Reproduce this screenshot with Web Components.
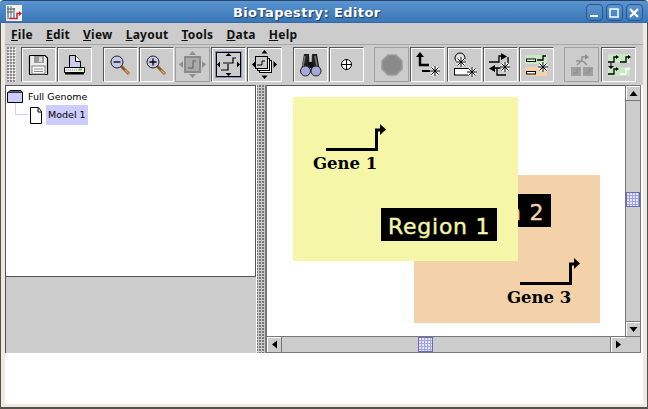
<!DOCTYPE html>
<html>
<head>
<meta charset="utf-8">
<title>BioTapestry: Editor</title>
<style>
  html, body { margin: 0; padding: 0; background: #fff; }
</style>
</head>
<body>
<bt-window>
  <bt-titlebar slot="title">BioTapestry: Editor</bt-titlebar>
  <bt-menubar slot="menu">
    <bt-menu>File</bt-menu>
    <bt-menu>Edit</bt-menu>
    <bt-menu>View</bt-menu>
    <bt-menu>Layout</bt-menu>
    <bt-menu>Tools</bt-menu>
    <bt-menu>Data</bt-menu>
    <bt-menu>Help</bt-menu>
  </bt-menubar>
  <bt-toolbar slot="tools">
    <bt-tool icon="save"></bt-tool>
    <bt-tool icon="print"></bt-tool>
    <bt-sep></bt-sep>
    <bt-tool icon="zoomout"></bt-tool>
    <bt-tool icon="zoomin"></bt-tool>
    <bt-tool icon="fitsel" disabled></bt-tool>
    <bt-tool icon="fitall" active></bt-tool>
    <bt-tool icon="fitpage"></bt-tool>
    <bt-sep></bt-sep>
    <bt-tool icon="search"></bt-tool>
    <bt-tool icon="center"></bt-tool>
    <bt-sep></bt-sep>
    <bt-tool icon="stop" disabled></bt-tool>
    <bt-tool icon="addgene"></bt-tool>
    <bt-tool icon="addnode"></bt-tool>
    <bt-tool icon="addlink"></bt-tool>
    <bt-tool icon="addregion"></bt-tool>
    <bt-sep></bt-sep>
    <bt-tool icon="tree" disabled></bt-tool>
    <bt-tool icon="sync"></bt-tool>
  </bt-toolbar>
  <bt-split slot="main">
    <bt-tree slot="left"></bt-tree>
    <bt-scrollpane slot="right">
      <bt-region name="Region 2" fill="#f3d2a9" ink="#f3d2a9" style="left:147px;top:89px;width:186px;height:148px;--lx:21px;--ly:19px"></bt-region>
      <bt-gene name="Gene 3" style="left:240px;top:170px"></bt-gene>
      <bt-region name="Region 1" fill="#f5f6a8" ink="#f5f6a8" style="left:26px;top:11px;width:225px;height:164px;--lx:88px;--ly:111px"></bt-region>
      <bt-gene name="Gene 1" style="left:46px;top:36px"></bt-gene>
    </bt-scrollpane>
  </bt-split>
</bt-window>

<script>
class BtWindow extends HTMLElement {
  constructor() {
    super();
    this.attachShadow({ mode: "open" });
  }
  connectedCallback() {
    this.shadowRoot.innerHTML = `
    <style>
      :host {
        display: flex;
        flex-direction: column;
        width: 648px;
        height: 409px;
        box-sizing: border-box;
        background: #fff;
        font-family: "DejaVu Sans", sans-serif;
        overflow: hidden;
      }
      .body {
        flex: 1;
        display: flex;
        flex-direction: column;
        min-height: 0;
        border-left: 1px solid #55524c;
        border-right: 1px solid #55524c;
        border-bottom: 2px solid #55524c;
        background: #fff;
      }
      .inner {
        flex: 1;
        min-height: 0;
        display: flex;
        flex-direction: column;
        border-left: 4px solid #edeae4;
        border-right: 4px solid #edeae4;
        border-bottom: 3px solid #edeae4;
      }
      .blank { flex: 1; background: #fff; }
    </style>
    <slot name="title"></slot>
    <div class="body">
      <div class="inner">
        <slot name="menu"></slot>
        <slot name="tools"></slot>
        <slot name="main"></slot>
        <div class="blank"></div>
      </div>
    </div>`;
  }
}

class BtTitlebar extends HTMLElement {
  constructor() {
    super();
    this.attachShadow({ mode: "open" });
  }
  connectedCallback() {
    this.shadowRoot.innerHTML = `
    <style>
      :host {
        display: flex;
        align-items: center;
        height: 23px;
        box-sizing: border-box;
        padding: 1px 5px 0 6px;
        background: linear-gradient(#5f97d2 0, #5590cc 3px, #4a86c4 10px, #3b76b6 21px, #2b5d98 22px, #2a4f7c 23px);
        border-top: 1px solid #27456b;
        border-radius: 4px 4px 0 0;
        color: #fff;
      }
      .logo { width: 16px; height: 16px; flex: none; }
      .text {
        flex: 1;
        text-align: center;
        padding-left: 6px;
        font: bold 13px "DejaVu Sans", sans-serif;
        letter-spacing: .4px;
        text-shadow: 1px 1px 1px #1f3d63;
      }
      .btns { display: flex; gap: 2.500px; }
      .b {
        width: 17.500px;
        height: 17px;
        box-sizing: border-box;
        border: 1px solid #2b568a;
        border-radius: 4px;
        background: linear-gradient(#5b94d0, #3f7dbd);
        display: flex;
        align-items: center;
        justify-content: center;
      }
      svg { display: block; }
    </style>
    <svg class="logo" viewBox="0 0 16 16">
      <rect width="16" height="16" fill="#f7f4f0"/>
      <path d="M2 1v13M8 3v11" stroke="#2a45c0" stroke-width="1" fill="none"/>
      <path d="M5 1v13" stroke="#2a9a3a" fill="none"/>
      <path d="M1 4h8M1 7h6" stroke="#555" fill="none"/>
      <path d="M3 13.500h8v-5h2" stroke="#d02020" stroke-width="1.500" fill="none"/>
      <path d="M13 6l3 2.500-3 2.500z" fill="#d02020"/>
    </svg>
    <span class="text"><slot></slot></span>
    <div class="btns">
      <div class="b"><svg width="10" height="10"><rect x="1" y="7" width="8" height="2" fill="#fff"/></svg></div>
      <div class="b"><svg width="10" height="10"><rect x="1" y="1" width="8" height="8" fill="none" stroke="#fff" stroke-width="1.500"/></svg></div>
      <div class="b"><svg width="10" height="10"><path d="M1 1l8 8M9 1l-8 8" stroke="#fff" stroke-width="2.200"/></svg></div>
    </div>`;
  }
}

class BtMenubar extends HTMLElement {
  constructor() {
    super();
    this.attachShadow({ mode: "open" });
  }
  connectedCallback() {
    this.shadowRoot.innerHTML = `
    <style>
      :host {
        display: flex;
        align-items: center;
        gap: 13px;
        height: 21px;
        box-sizing: border-box;
        padding: 2px 0 0 6px;
        background: #ccc;
      }
    </style>
    <slot></slot>`;
  }
}

class BtMenu extends HTMLElement {
  constructor() {
    super();
    this.attachShadow({ mode: "open" });
  }
  connectedCallback() {
    const label = this.textContent;
    this.shadowRoot.innerHTML = `
    <style>
      :host {
        display: block;
        font: bold 12px "Noto Sans", sans-serif;
        color: #111;
        letter-spacing: .25px;
      }
      u { text-underline-offset: 1px; }
    </style>
    <u>${label[0]}</u>${label.slice(1)}`;
  }
}

class BtToolbar extends HTMLElement {
  constructor() {
    super();
    this.attachShadow({ mode: "open" });
  }
  connectedCallback() {
    this.shadowRoot.innerHTML = `
    <style>
      :host {
        display: flex;
        align-items: flex-start;
        height: 41px;
        box-sizing: border-box;
        padding: 2px 0 0 2px;
        background: #ccc;
        border-top: 1px solid #a8a8a8;
      }
      .grip {
        width: 9px;
        height: 35px;
        margin-right: 5px;
        background-image: radial-gradient(circle at 1px 1px, #8a8a8a 1px, transparent 1px), radial-gradient(circle at 1px 1px, #eee .8px, transparent 1px);
        background-size: 3px 3px;
        background-position: 0 0, 1px 1px;
      }
      .row { display: flex; gap: 1.200px; }
    </style>
    <div class="grip"></div>
    <div class="row"><slot></slot></div>`;
  }
}

class BtSep extends HTMLElement {
  constructor() {
    super();
    this.attachShadow({ mode: "open" });
  }
  connectedCallback() {
    this.shadowRoot.innerHTML = `<style>:host { display: block; width: 8px; }</style>`;
  }
}

const STAR = (x, y, c = "#000") => {
  const d = `M${x - 5} ${y}h10M${x} ${y - 5}v10M${x - 3.500} ${y - 3.500}l7 7M${x + 3.500} ${y - 3.500}l-7 7`;
  return `<path d="${d}" stroke="#fff" stroke-width="2.500" fill="none"/><path d="${d}" stroke="${c}" stroke-width="1" fill="none"/>`;
};
const LENS = (cx, cy, mark) => `
  <path d="M${cx + 4} ${cy + 4}l8 8" stroke="#8a5a2a" stroke-width="3"/>
  <path d="M${cx + 8} ${cy + 8}l4 4" stroke="#e0a060" stroke-width="1.500"/>
  <circle cx="${cx}" cy="${cy}" r="6" fill="#c6c6ea" stroke="#222" stroke-width="1"/>
  <path d="${mark}" stroke="#000" stroke-width="1.300"/>`;
const ARROWS = (c) => `
  <path d="M17.500 4l-3.500 4h7zM17.500 31l-3.500-4h7zM4 17.500l4-3.500v7zM31 17.500l-4-3.500v7z" fill="${c}"/>`;

const ICONS = {
  save: `
    <path d="M9 8.500h15l2.500 2.500v16a.5.5 0 0 1-.5.5H9a.5.5 0 0 1-.5-.5V9a.5.5 0 0 1 .5-.5z" fill="#eee" stroke="#000" stroke-width="1.200"/>
    <rect x="13" y="9" width="10" height="7" fill="#999"/>
    <rect x="18" y="10" width="3" height="5" fill="#ddd"/>
    <rect x="11" y="19" width="13" height="8" fill="#fff" stroke="#777"/>
    <path d="M13 22h9M13 24.500h9" stroke="#888"/>`,
  print: `
    <path d="M12.500 8.500h6l5 6v6h-11z" fill="#ccccee" stroke="#000"/>
    <path d="M18.500 8.500v6h5" fill="#fff" stroke="#000"/>
    <path d="M7.500 20.500h20v5h-20z" fill="#eee" stroke="#000"/>
    <path d="M8 26.500h19" stroke="#000" stroke-width="2"/>
    <path d="M9 23h14" stroke="#888" stroke-dasharray="1 1"/>
    <rect x="22" y="21.500" width="3" height="2" fill="#44cc22"/>`,
  zoomout: LENS(14, 15, "M10.500 15h7"),
  zoomin: LENS(14, 15, "M10.500 15h7M14 11.500v7"),
  fitsel: `
    ${ARROWS("#8f8f8f")}
    <rect x="10" y="10" width="15" height="15" fill="#aaa" stroke="#8a8a8a" stroke-width="2"/>
    <path d="M13 21h5v-7h3" stroke="#777" stroke-width="1.500" fill="none"/>`,
  fitall: `
    <rect x="4.500" y="4.500" width="26" height="26" fill="none" stroke="#8f8fc8"/>
    <rect x="5.500" y="5.500" width="24" height="24" fill="none" stroke="#000"/>
    <path d="M17.500 6l-3 3h6zM17.500 29l-3-3h6zM6 17.500l3-3v6zM29 17.500l-3-3v6z" fill="#000"/>
    <path d="M10 23h7v-6M17 16h5v-5h3M12 16h5" stroke="#000" stroke-width="1.200" fill="none"/>`,
  fitpage: `
    <path d="M17.500 3l-3 3.500h6zM17.500 32l-3-3.500h6zM5 17.500l3.500-3.500v7zM30 17.500l-3.500-3.500v7z" fill="#000"/>
    <rect x="12.500" y="13.500" width="12" height="12" fill="#fff" stroke="#000"/>
    <rect x="10.500" y="11.500" width="12" height="12" fill="#fff" stroke="#000"/>
    <rect x="8.500" y="9.500" width="12" height="12" fill="#ccc" stroke="#000"/>
    <path d="M10 18h5v-4h3" stroke="#000" fill="none"/>`,
  search: `
    <path d="M8 24L11 7h5l1 17zM18 24l1-17h5l3 17z" fill="#222"/>
    <path d="M12 9l-2 10M22 9l2 10" stroke="#777" stroke-width="1.500"/>
    <rect x="15" y="15" width="5" height="6" fill="#111"/>
    <circle cx="12.500" cy="24" r="5" fill="#a8a8dc" stroke="#222"/>
    <circle cx="23" cy="24" r="5" fill="#a8a8dc" stroke="#222"/>`,
  center: `
    <circle cx="17.500" cy="17.500" r="5" fill="#fff" stroke="#000"/>
    <path d="M12 17.500h11M17.500 12v11" stroke="#000"/>`,
  stop: `<path d="M14 8h8l6 6v8l-6 6h-8l-6-6v-8z" fill="#8a8a8a" stroke="#9c9c9c" stroke-width="1.500"/>`,
  addgene: `
    <path d="M10 9v9h9" stroke="#000" stroke-width="2.500" fill="none"/>
    <path d="M10 5l-4 5h8z" fill="#000"/>
    <path d="M12 24h10" stroke="#000" stroke-width="2"/>
    ${STAR(25, 24)}`,
  addnode: `
    <circle cx="13" cy="11" r="5" fill="#ddd" stroke="#000"/>
    ${STAR(14, 15)}
    <rect x="7.500" y="21.500" width="16" height="6.500" fill="#fff" stroke="#000"/>
    ${STAR(25, 25)}`,
  addlink: `
    <path d="M6 15h10V9h4M25 10v6M14 21v7h9M12 21h9" stroke="#000" stroke-width="1.300" fill="none"/>
    <path d="M18 6l6 3.500-6 3.500zM12 18l-6 3.500 6 3.500z" fill="#000"/>
    ${STAR(22, 20)}`,
  addregion: `
    <rect x="6" y="8" width="22" height="9" fill="#c9e8c4"/>
    <rect x="6" y="20" width="22" height="9" fill="#f3d2a9"/>
    <rect x="7.500" y="12" width="9" height="2.500" fill="#fff" stroke="#000"/>
    <rect x="7.500" y="24.500" width="9" height="2.500" fill="#fff" stroke="#000"/>
    <path d="M18 13h6v-4h3" stroke="#000" stroke-width="1.300" fill="none"/>
    ${STAR(24, 20)}`,
  tree: `
    <rect x="7" y="20" width="10" height="9" fill="#a0a0a0"/>
    <rect x="19" y="20" width="10" height="9" fill="#a0a0a0"/>
    <path d="M13 18l4-4M23 18l-4-4M12 14h6v-4h3" stroke="#8f8f8f" stroke-width="1.500" fill="none"/>
    <path d="M9 26h4v-4h3M21 26h4v-4h3" stroke="#8a8a8a" fill="none"/>
    <path d="M21 7l4 3-4 3z" fill="#8f8f8f"/>`,
  sync: `
    <rect x="7" y="7" width="22" height="9" fill="#c9e8c4"/>
    <rect x="7" y="20" width="22" height="9" fill="#c9e8c4"/>
    <path d="M7 15h6v-5h3M19 15h6v-5h3M7 27h6v-5h3" stroke="#000" stroke-width="1.300" fill="none"/>
    <path d="M19 27h6v-5h3" stroke="#fff" stroke-width="1.300" fill="none"/>
    <path d="M15 8l3 2-3 2zM27 8l3 2-3 2zM15 20l3 2-3 2z" fill="#000"/>
    <path d="M27 20l3 2-3 2z" fill="#eee"/>
    <path d="M10 16v3" stroke="#000"/><path d="M7 19h6l-3 3z" fill="#000"/>`
};

class BtTool extends HTMLElement {
  constructor() {
    super();
    this.attachShadow({ mode: "open" });
  }
  connectedCallback() {
    const dis = this.hasAttribute("disabled");
    this.shadowRoot.innerHTML = `
    <style>
      :host {
        display: block;
        width: 35px;
        height: 35px;
        box-sizing: border-box;
        background: #ccc;
        border: 1px solid ${dis ? "#a0a0a0" : "#555"};
        border-right-color: ${dis ? "#a0a0a0" : "#fff"};
        border-bottom-color: ${dis ? "#a0a0a0" : "#fff"};
        box-shadow: ${dis ? "none" : "inset 1px 1px 0 #fff"};
      }
      svg { display: block; margin: -1px; }
    </style>
    <svg width="35" height="35" viewBox="0 0 35 35">${ICONS[this.getAttribute("icon")]}</svg>`;
  }
}

class BtSplit extends HTMLElement {
  constructor() {
    super();
    this.attachShadow({ mode: "open" });
  }
  connectedCallback() {
    this.shadowRoot.innerHTML = `
    <style>
      :host {
        display: flex;
        height: 268px;
        background: #ccc;
      }
      .left {
        width: 251px;
        flex: none;
        display: flex;
        box-sizing: border-box;
        border-left: 1px solid #555;
        height: 268px;
      }
      .divider {
        width: 11px;
        flex: none;
        box-sizing: border-box;
        border-left: 1px solid #fff;
        border-right: 2px solid #777;
        background-color: #ccc;
        background-image: radial-gradient(circle at 1px 1px, #777 1px, transparent 1px);
        background-size: 3px 3px;
        background-position: 2px 0;
      }
      .right { flex: 1; min-width: 0; display: flex; }
      ::slotted(*) { flex: 1; }
    </style>
    <div class="left"><slot name="left"></slot></div>
    <div class="divider"></div>
    <div class="right"><slot name="right"></slot></div>`;
  }
}

class BtTree extends HTMLElement {
  constructor() {
    super();
    this.attachShadow({ mode: "open" });
  }
  connectedCallback() {
    this.shadowRoot.innerHTML = `
    <style>
      :host {
        display: block;
        background: #ccc;
        font: 9.500px "DejaVu Sans", sans-serif;
        color: #000;
      }
      .box {
        height: 192px;
        box-sizing: border-box;
        background: #fff;
        border: 1px solid #555;
        border-left: 0;
        padding-top: 1px;
      }
      .row { display: flex; align-items: center; gap: 4px; height: 20px; }
      .row.top { padding-left: 1px; height: 18px; }
      .row.sub { padding-left: 23px; position: relative; gap: 3px; }
      .row.sub::before {
        content: "";
        position: absolute;
        left: 9px;
        top: -2px;
        width: 12px;
        height: 11px;
        border-left: 1px solid #ccccff;
        border-bottom: 1px solid #ccccff;
      }
      .sel { background: #ccccff; padding: 0 2px; height: 20px; line-height: 20px; }
      svg { display: block; flex: none; }
    </style>
    <div class="box">
      <div class="row top">
        <svg width="17" height="13" viewBox="0 0 17 13">
          <path d="M.5 2.500h15v10h-15z" fill="#ccccff" stroke="#000"/>
          <path d="M1 2.500l2-2h11l1.500 2" fill="#666680" stroke="#000"/>
        </svg>
        <span>Full Genome</span>
      </div>
      <div class="row sub">
        <svg width="14" height="17" viewBox="0 0 14 17">
          <path d="M1.500 .5h8l3 4v12h-11z" fill="#fff" stroke="#000"/>
          <path d="M9 1v4h3.500" fill="none" stroke="#000"/>
        </svg>
        <span class="sel">Model 1</span>
      </div>
    </div>`;
  }
}

class BtScrollpane extends HTMLElement {
  constructor() {
    super();
    this.attachShadow({ mode: "open" });
  }
  connectedCallback() {
    this.shadowRoot.innerHTML = `
    <style>
      :host {
        display: grid;
        grid-template-columns: 358px 16px 1fr;
        grid-template-rows: 251px 17px;
        background: #ccc;
      }
      .view {
        position: relative;
        background: #fff;
        overflow: hidden;
        border-top: 1px solid #555;
      }
      .pad { grid-row: 1 / span 2; grid-column: 3; background: #fff; }
      .corner { background: #ccc; border-top: 1px solid #777; border-right: 1px solid #777; border-bottom: 1px solid #777; }
    </style>
    <div class="view"><slot></slot></div>
    <bt-scrollbar dir="v" pos="106"></bt-scrollbar>
    <div class="pad"></div>
    <bt-scrollbar dir="h" pos="136"></bt-scrollbar>
    <div class="corner"></div>`;
  }
}

class BtScrollbar extends HTMLElement {
  constructor() {
    super();
    this.attachShadow({ mode: "open" });
  }
  connectedCallback() {
    const v = this.getAttribute("dir") === "v";
    const pos = this.getAttribute("pos");
    this.shadowRoot.innerHTML = `
    <style>
      :host {
        display: flex;
        flex-direction: ${v ? "column" : "row"};
        box-sizing: border-box;
        background: #ccc;
        border: 1px solid #777;
        ${v ? "border-bottom: 0;" : "border-right: 0; border-left: 0;"}
        position: relative;
      }
      .arrow {
        flex: none;
        ${v ? "height: 15px;" : "width: 15px;"}
        box-sizing: border-box;
        display: flex;
        align-items: center;
        justify-content: center;
        box-shadow: inset 1px 1px 0 #fff;
      }
      .first { ${v ? "border-bottom: 1px solid #777;" : "border-right: 1px solid #777;"} }
      .last { ${v ? "border-top: 1px solid #777;" : "border-left: 1px solid #777;"} }
      .track { flex: 1; position: relative; }
      .thumb {
        position: absolute;
        ${v ? `top: ${pos - 15}px; left: 0; right: 0; height: 15px;` : `left: ${pos}px; top: 0; bottom: 0; width: 15px;`}
        box-sizing: border-box;
        border: 1px solid #6b6bb0;
        background-color: #a4a4dc;
        background-image: radial-gradient(circle at 1px 1px, #e4e4ff .8px, transparent 1px);
        background-size: 3px 3px;
      }
      svg { display: block; }
    </style>
    <div class="arrow first"><svg width="9" height="9"><path d="${v ? "M4.500 2l4 5h-8z" : "M2 4.500l5-4v8z"}" fill="#000"/></svg></div>
    <div class="track"><div class="thumb"></div></div>
    <div class="arrow last"><svg width="9" height="9"><path d="${v ? "M4.500 7l4-5h-8z" : "M7 4.500l-5-4v8z"}" fill="#000"/></svg></div>`;
  }
}

class BtRegion extends HTMLElement {
  constructor() {
    super();
    this.attachShadow({ mode: "open" });
  }
  connectedCallback() {
    const fill = this.getAttribute("fill");
    this.shadowRoot.innerHTML = `
    <style>
      :host { display: block; position: absolute; background: ${fill}; }
      .label {
        position: absolute;
        left: var(--lx);
        top: var(--ly);
        height: 33px;
        padding: 0 7px;
        background: #000;
        color: ${this.getAttribute("ink")};
        font: 22px/37px "DejaVu Sans", sans-serif;
        -webkit-text-stroke: .4px ${this.getAttribute("ink")};
        letter-spacing: .75px;
        white-space: nowrap;
      }
    </style>
    <span class="label">${this.getAttribute("name")}</span>`;
  }
}

class BtGene extends HTMLElement {
  constructor() {
    super();
    this.attachShadow({ mode: "open" });
  }
  connectedCallback() {
    this.shadowRoot.innerHTML = `
    <style>
      :host { display: block; position: absolute; width: 90px; height: 70px; }
      svg { display: block; position: absolute; left: 13px; top: 0; }
      span {
        position: absolute;
        left: 0;
        top: 32px;
        font: bold 16.500px "DejaVu Serif", serif;
        color: #000;
        white-space: nowrap;
      }
    </style>
    <svg width="62" height="32" viewBox="0 0 62 32">
      <path d="M0 27.500h50.500V8H54" fill="none" stroke="#000" stroke-width="3"/>
      <path d="M54 2l6 5.500-6 5.500z" fill="#000"/>
    </svg>
    <span>${this.getAttribute("name")}</span>`;
  }
}

customElements.define("bt-window", BtWindow);
customElements.define("bt-titlebar", BtTitlebar);
customElements.define("bt-menubar", BtMenubar);
customElements.define("bt-menu", BtMenu);
customElements.define("bt-toolbar", BtToolbar);
customElements.define("bt-sep", BtSep);
customElements.define("bt-tool", BtTool);
customElements.define("bt-split", BtSplit);
customElements.define("bt-tree", BtTree);
customElements.define("bt-scrollpane", BtScrollpane);
customElements.define("bt-scrollbar", BtScrollbar);
customElements.define("bt-region", BtRegion);
customElements.define("bt-gene", BtGene);
</script>
</body>
</html>
